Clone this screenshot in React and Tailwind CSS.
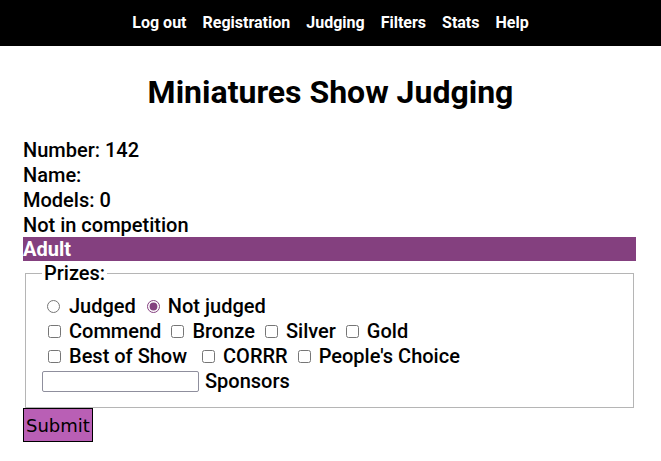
export default function App() {
  const links = ["Log out", "Registration", "Judging", "Filters", "Stats", "Help"];
  return (
    <div className="min-h-screen bg-white text-black font-['Roboto',sans-serif]">
      {/* Top nav */}
      <nav className="h-[46px] bg-black flex items-center justify-center gap-4">
        {links.map((l) => (
          <a key={l} className="text-white font-bold text-[16px] leading-none">
            {l}
          </a>
        ))}
      </nav>

      <h1 className="text-center font-bold text-[32px] leading-none mt-[30px] mb-[30px]">
        Miniatures Show Judging
      </h1>

      <div className="px-[23px] pr-[25px] text-[20px] font-medium leading-[25px]">
        <div>Number: 142</div>
        <div>Name:</div>
        <div>Models: 0</div>
        <div className="leading-[24px]">Not in competition</div>
        <div className="bg-[#84407f] text-white font-bold leading-[24px]">Adult</div>

        <form>
          <fieldset className="mx-[2px] mt-px border border-[#b5b5b5] pl-[16px] pr-3 pb-[13px]">
            <legend className="px-[2px] leading-[22px]">Prizes:</legend>
            <div className="pt-[10px]">
              <label className="inline-flex items-center">
                <input type="radio" name="j" className="ml-[5px] mr-[9px] w-[13px] h-[13px] accent-[#84407f]" />
                Judged
              </label>
              <label className="inline-flex items-center">
                <input type="radio" name="j" defaultChecked className="ml-[11px] mr-[8px] w-[13px] h-[13px] accent-[#84407f]" />
                Not judged
              </label>
            </div>
            <div>
              <Check label="Commend" first />
              <Check label="Bronze" />
              <Check label="Silver" />
              <Check label="Gold" />
            </div>
            <div>
              <Check label="Best of Show" first />
              <Check label="CORRR" wide />
              <Check label="People's Choice" />
            </div>
            <div className="flex items-center">
              <input type="text" className="w-[157px] h-[21px] border border-[#8f8f9d] rounded-[2px] mr-[6px]" />
              Sponsors
            </div>
          </fieldset>
          <button
            type="button"
            className="h-[34px] px-[2px] bg-[#b95fb5] border border-black font-['DejaVu_Sans',sans-serif] font-normal text-[18px] text-black"
          >
            Submit
          </button>
        </form>
      </div>
    </div>
  );
}

function Check({ label, first, wide }) {
  const ml = first ? "ml-[6px]" : wide ? "ml-[15px]" : "ml-[10px]";
  return (
    <label className="inline-flex items-center">
      <input type="checkbox" className={`${ml} mr-[8px] w-[13px] h-[13px] accent-[#84407f]`} />
      {label}
    </label>
  );
}
